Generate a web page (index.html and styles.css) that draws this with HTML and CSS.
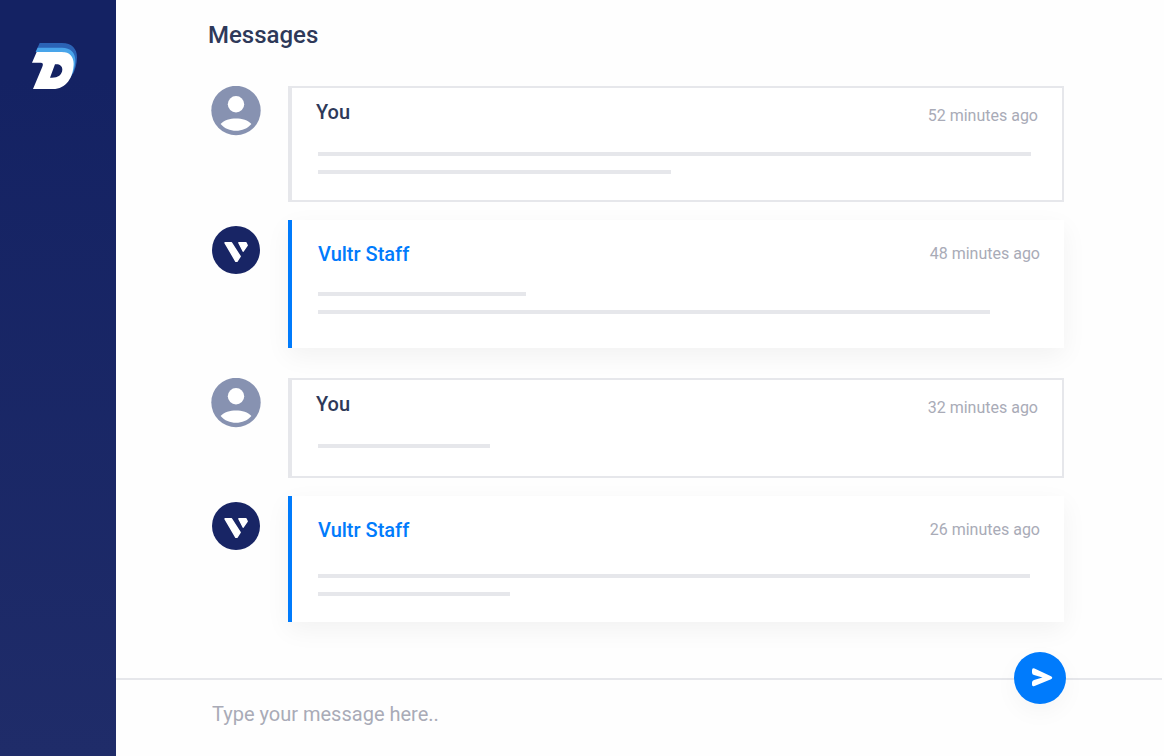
FILE: index.html
```html
<!DOCTYPE html>
<html lang="en">
<head>
<meta charset="utf-8">
<meta name="viewport" content="width=device-width, initial-scale=1">
<title>Messages</title>
<link rel="stylesheet" href="styles.css">
</head>
<body>
<svg class="symbols" aria-hidden="true">
  <symbol id="person" viewBox="0 0 50 50">
    <circle cx="25" cy="24.500" r="24.700" fill="#8792b1"/>
    <circle cx="25" cy="18.300" r="8.200" fill="#fff"/>
    <path d="M9.600 38C13 34.400 19 32.600 25 32.600S37 34.400 40.400 38C36.500 42.500 31 44.800 25 44.800S13.500 42.500 9.600 38Z" fill="#fff"/>
  </symbol>
  <symbol id="vultr" viewBox="0 0 48 48">
    <circle cx="24" cy="24" r="24" fill="#182565"/>
    <path d="M13 16.800H19.500L28.200 30.300L25 35.300L23.800 35.300Z M26.800 16.800H34L35.200 19.300L31.200 25.200Z" fill="#fff" stroke="#fff" stroke-width="1.400" stroke-linejoin="round"/>
  </symbol>
</svg>
<div class="app">
  <nav class="sidebar" aria-label="Main">
    <a class="brand" href="#" aria-label="Home">
      <svg viewBox="33 36 144 144">
        <path d="M59 39H126C156 39 171 57 171 82C171 102 165 121 158 134L140 66H47Z" fill="#2b63b5"/>
        <path d="M53 53H126C152 53 166 68 166 91C166 112 158 132 151 144L130 66H47Z" fill="#49a5ea"/>
        <path fill-rule="evenodd" d="M50 66H126C149 66 161 80 161 101C160 143 138 177 99 177H39L67 110Q72 98 62 98H36ZM105 103L90 143H96C114 143 126 134 127 119C127 109 120 103 109 103Z" fill="#fff"/>
      </svg>
    </a>
  </nav>
  <main class="main">
    <section class="thread">
      <h1 class="title">Messages</h1>
      <div class="exchange">
        <article class="message">
          <svg class="avatar" aria-hidden="true"><use href="#person"/></svg>
          <div class="card">
            <header class="head"><h2 class="name">You</h2><time class="time">52 minutes ago</time></header>
            <div class="lines"><span class="line" style="width:99%"></span><span class="line" style="width:49%"></span></div>
          </div>
        </article>
        <article class="message message-staff">
          <svg class="avatar" aria-hidden="true"><use href="#vultr"/></svg>
          <div class="card">
            <header class="head"><h2 class="name">Vultr Staff</h2><time class="time">48 minutes ago</time></header>
            <div class="lines"><span class="line" style="width:28.8%"></span><span class="line" style="width:93.1%"></span></div>
          </div>
        </article>
      </div>
      <div class="exchange">
        <article class="message message-short">
          <svg class="avatar" aria-hidden="true"><use href="#person"/></svg>
          <div class="card">
            <header class="head"><h2 class="name">You</h2><time class="time">32 minutes ago</time></header>
            <div class="lines"><span class="line" style="width:23.9%"></span></div>
          </div>
        </article>
        <article class="message message-staff message-latest">
          <svg class="avatar" aria-hidden="true"><use href="#vultr"/></svg>
          <div class="card">
            <header class="head"><h2 class="name">Vultr Staff</h2><time class="time">26 minutes ago</time></header>
            <div class="lines"><span class="line" style="width:98.6%"></span><span class="line" style="width:26.6%"></span></div>
          </div>
        </article>
      </div>
    </section>
    <form class="composer">
      <input class="field" type="text" aria-label="Message" placeholder="Type your message here..">
      <button class="send" type="button" aria-label="Send message">
        <svg viewBox="0 0 52 52"><path d="M18 18.500V20.500Q18 22.500 20 23L28.500 25.500L20 28Q18 28.500 18 30.500V32.500Q18 35 20.500 34L37 27.200Q39.500 25.700 37 24.200L20.500 16.500Q18 15.500 18 18.500Z" fill="#fff"/></svg>
      </button>
    </form>
  </main>
</div>
</body>
</html>
```
FILE: styles.css
```css
* {
  box-sizing: border-box;
}

body {
  margin: 0;
  font-family: Roboto, "Liberation Sans", sans-serif;
  color: #2e3959;
  background: #fefefe;
}

.symbols {
  position: absolute;
  width: 0;
  height: 0;
}

.app {
  display: flex;
  min-height: 100vh;
}

.sidebar {
  flex: none;
  width: 116px;
  padding: 42px 0 0 31px;
  background: linear-gradient(#142263 10%, #1f2c69);
}

.brand,
.brand svg {
  display: block;
  width: 48px;
  height: 48px;
}

.main {
  flex: 1;
  min-width: 0;
  display: flex;
  flex-direction: column;
  padding-right: 2px;
}

.thread {
  flex: 1;
  display: flex;
  flex-direction: column;
  gap: 30px;
  padding: 20px 98px 56px 92px;
}

.title {
  margin: 0 0 6px;
  font-size: 24px;
  font-weight: 500;
  line-height: 30px;
}

.exchange {
  display: flex;
  flex-direction: column;
  gap: 18px;
}

.message {
  display: grid;
  grid-template-columns: 56px 1fr;
  column-gap: 24px;
}

.avatar {
  width: 50px;
  height: 50px;
  justify-self: center;
}

.card {
  padding: 12px 24px 26px;
  border: 2px solid #e6e7eb;
  border-left-width: 4px;
  background: #fff;
}

.head {
  display: flex;
  justify-content: space-between;
  align-items: flex-end;
  height: 24px;
}

.name {
  margin: 0;
  font-size: 20px;
  font-weight: 500;
  line-height: 24px;
}

.time {
  font-size: 16px;
  line-height: 16px;
  color: #a9abb7;
}

.lines {
  display: flex;
  flex-direction: column;
  gap: 14px;
  margin: 28px 0 0 2px;
}

.line {
  height: 4px;
  background: #e6e7eb;
}

.message-short .card {
  padding-bottom: 28px;
}

.message-staff .avatar {
  width: 48px;
  height: 48px;
  margin-top: 6px;
}

.message-staff .card {
  padding: 22px 24px 34px 26px;
  border: 0;
  border-left: 4px solid #007bfc;
  box-shadow: 0 8px 24px rgba(0, 0, 0, 0.05);
}

.message-staff .head {
  align-items: center;
}

.message-staff .name {
  color: #007bfc;
}

.message-staff .lines {
  margin: 26px 0 0;
}

.message-latest .card {
  padding-bottom: 26px;
}

.message-latest .lines {
  margin-top: 32px;
}

.composer {
  position: relative;
  padding-bottom: 8px;
  border-top: 2px solid #e6e7eb;
}

.field {
  display: block;
  width: 100%;
  height: 68px;
  padding: 0 96px;
  border: 0;
  outline: 0;
  font: 400 20px/24px Roboto, "Liberation Sans", sans-serif;
  color: #2e3959;
  background: transparent;
}

.field::placeholder {
  color: #a9abb7;
  opacity: 1;
}

.send {
  position: absolute;
  top: -28px;
  right: 96px;
  width: 52px;
  height: 52px;
  padding: 0;
  border: 0;
  border-radius: 50%;
  background: #007bfc;
  box-shadow: 0 8px 24px rgba(0, 0, 0, 0.04);
  cursor: pointer;
}

.send svg {
  display: block;
}
```
